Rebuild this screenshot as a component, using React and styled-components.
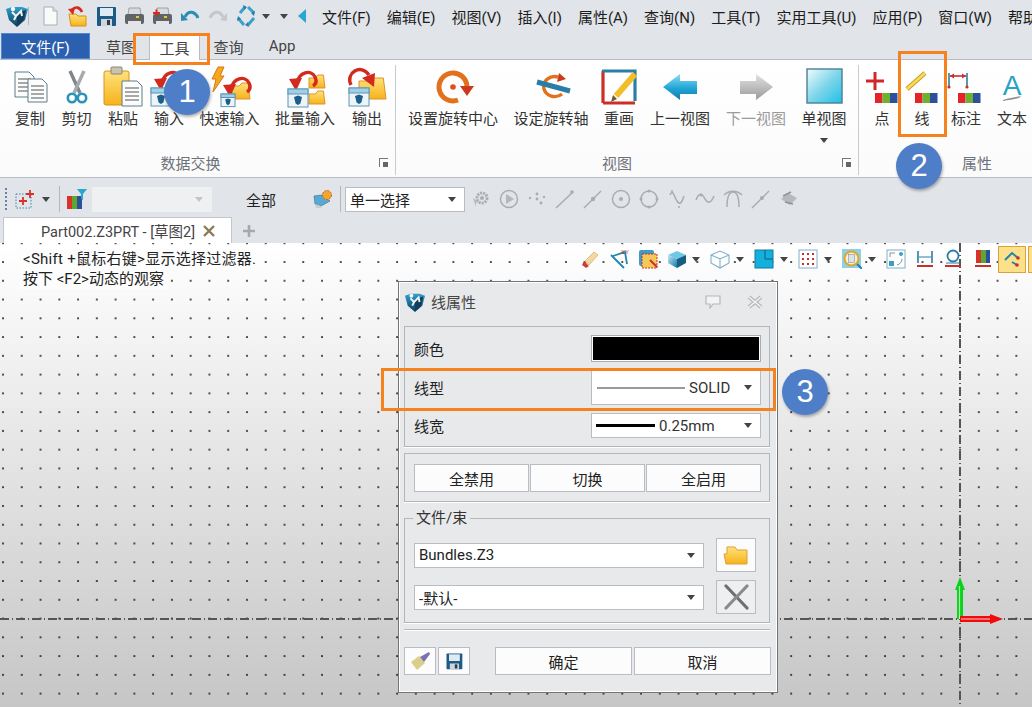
import React from "react";
import styled, { createGlobalStyle } from "styled-components";

const GlobalStyle = createGlobalStyle`
  html, body { margin: 0; padding: 0; }
  body {
    width: 1032px;
    height: 707px;
    overflow: hidden;
    font-family: Roboto, "Noto Sans CJK SC", sans-serif;
    font-size: 15px;
    color: #222;
  }
  * { box-sizing: border-box; }
`;

const ORANGE = "#f5821f";

const Page = styled.div`
  position: relative;
  width: 1032px;
  height: 707px;
  display: flex;
  flex-direction: column;
  overflow: hidden;
  background: #e1e4e8;
`;

const QuickBar = styled.div`
  height: 32px;
  flex: none;
  display: flex;
  align-items: center;
  padding-left: 6px;
  white-space: nowrap;
  overflow: hidden;
  svg { flex: none; }
`;

const QuickTools = styled.div`
  display: flex;
  flex: none;
  align-items: center;
  gap: 4px;
  margin-left: 9px;
`;

const Separator = styled.span`
  width: 1px;
  height: ${(p) => p.$h || 22}px;
  background: #b4b8bd;
  flex: none;
  margin-left: ${(p) => p.$m || 0}px;
`;

const MenuBar = styled.nav`
  display: flex;
  flex: none;
  gap: 16px;
  margin-left: 15px;
  color: #1c1c1c;
  span { flex: none; }
`;

const Caret = styled.i`
  display: block;
  flex: none;
  width: 0;
  height: 0;
  border-left: 4px solid transparent;
  border-right: 4px solid transparent;
  border-top: 5px solid ${(p) => p.$c || "#444"};
  margin-left: ${(p) => p.$m || 0}px;
  margin-top: ${(p) => p.$mt || 0}px;
`;

const TabRow = styled.div`
  height: 27px;
  flex: none;
  display: flex;
  align-items: flex-end;
  padding-left: 1px;
`;

const FileTab = styled.div`
  width: 89px;
  height: 26px;
  background: #2b5fb0;
  border: 1px solid #4d87d8;
  color: #fff;
  display: flex;
  align-items: center;
  justify-content: center;
`;

const RibbonTab = styled.div`
  height: 27px;
  width: ${(p) => p.$w}px;
  padding-left: ${(p) => p.$pl || 0}px;
  display: flex;
  align-items: center;
  justify-content: center;
  color: #444;
  background: ${(p) => (p.$active ? "#fff" : "transparent")};
  border: 1px solid ${(p) => (p.$active ? "#b9bdc3" : "transparent")};
  border-bottom: none;
  margin-bottom: ${(p) => (p.$active ? "-1px" : "0")};
  position: relative;
`;

const Ribbon = styled.section`
  height: 119px;
  flex: none;
  display: flex;
  overflow: hidden;
  background: linear-gradient(#fff, #fbfbfb);
  border-top: 1px solid #b9bdc3;
  border-bottom: 1px solid #b9bdc3;
`;

const Group = styled.div`
  width: ${(p) => p.$w}px;
  flex: none;
  display: flex;
  flex-direction: column;
  position: relative;
  margin: 5px 0 2px;
  border-right: ${(p) => (p.$last ? "none" : "1px solid #c8ccd1")};
`;

const GroupItems = styled.div`
  flex: 1;
  display: flex;
  padding-left: ${(p) => p.$pad}px;
`;

const GroupLabel = styled.div`
  height: 30px;
  padding-top: 6px;
  line-height: 26px;
  text-align: center;
  color: #6d737b;
  padding-right: ${(p) => p.$pr || 0}px;
`;

const Launcher = styled.span`
  position: absolute;
  right: 7px;
  bottom: 8px;
  width: 9px;
  height: 9px;
  border-left: 1px solid #777;
  border-top: 1px solid #777;
  &::after {
    content: "";
    position: absolute;
    right: 0;
    bottom: 0;
    width: 5px;
    height: 5px;
    background: #666;
  }
`;

const RibbonItem = styled.div`
  width: ${(p) => p.$w}px;
  flex: none;
  display: flex;
  flex-direction: column;
  align-items: center;
  white-space: nowrap;
  color: ${(p) => (p.$disabled ? "#9b9b9b" : "#333")};
  line-height: 20px;
  svg { display: block; flex: none; }
`;

const Toolbar = styled.div`
  height: 39px;
  flex: none;
  display: flex;
  align-items: center;
  padding: 3px 0 0 5px;
`;

const Grip = styled.span`
  width: 2px;
  height: 22px;
  flex: none;
  background: repeating-linear-gradient(#6a7fa8 0 2px, transparent 2px 4px);
`;

const FakeSelect = styled.div`
  width: ${(p) => p.$w}px;
  height: ${(p) => p.$h || 25}px;
  flex: none;
  display: flex;
  align-items: center;
  justify-content: space-between;
  padding: 0 8px 0 ${(p) => p.$pl ?? 4}px;
  background: ${(p) => (p.$disabled ? "#eff0f1" : "#fff")};
  border: 1px solid ${(p) => (p.$disabled ? "#eff0f1" : "#b9bdc3")};
  margin-left: ${(p) => p.$m || 0}px;
  color: #222;
`;

const ToolbarText = styled.span`
  width: 30px;
  margin-left: 34px;
  flex: none;
  white-space: nowrap;
`;

const GrayTools = styled.div`
  display: flex;
  gap: 8px;
  margin-left: 6px;
`;

const DocTabs = styled.div`
  height: 26px;
  flex: none;
  display: flex;
  align-items: flex-end;
  padding-left: 3px;
`;

const DocTab = styled.div`
  width: 229px;
  height: 26px;
  background: #fff;
  border: 1px solid #c4c8cd;
  border-bottom: none;
  display: flex;
  align-items: center;
  padding-left: 37px;
  color: #444;
  font-size: 14.5px;
  white-space: nowrap;
  gap: 7px;
`;

const AddTab = styled.span`
  margin: 0 0 4px 10px;
  display: block;
  height: 16px;
`;

const Canvas = styled.main`
  flex: 1;
  position: relative;
  overflow: hidden;
  padding: 6px 0 0 20px;
  background-color: #fff;
  background-image:
    radial-gradient(circle at 1px 1px, #000 0.6px, transparent 0.9px),
    linear-gradient(#fff 0%, #c6c6c6 100%);
  background-size: 18.78px 18.78px, 100% 100%;
  background-position: 2px 18px, 0 0;
`;

const NoteLine = styled.div`
  width: fit-content;
  height: 20px;
  line-height: 20px;
  padding: 0 3px;
  background: #fdfdfd;
  color: #222;
  letter-spacing: ${(p) => p.$ls || 0}px;
`;

const AxisH = styled.div`
  position: absolute;
  left: 0;
  right: 0;
  top: 375px;
  height: 2px;
  background: repeating-linear-gradient(90deg, #555 0 9px, transparent 9px 12px, #555 12px 13px, transparent 13px 16px);
`;

const AxisV = styled.div`
  position: absolute;
  left: 959px;
  top: 0;
  bottom: 0;
  width: 2px;
  background: repeating-linear-gradient(#555 0 9px, transparent 9px 12px, #555 12px 13px, transparent 13px 16px);
`;

const AxisArrows = styled.svg`
  position: absolute;
  left: 945px;
  top: 333px;
`;

const CanvasTools = styled.div`
  position: absolute;
  left: 579px;
  top: 3px;
  display: flex;
  align-items: center;
  height: 26px;
`;

const Tool = styled.span`
  width: 22px;
  height: 24px;
  flex: none;
  display: flex;
  align-items: center;
  justify-content: center;
  margin-left: ${(p) => p.$m || 0}px;
  ${(p) => p.$on && `
    background: #fde08a;
    border: 1px solid #d8a23c;
    width: 28px;
    height: 27px;
  `}
`;

const Dialog = styled.section`
  position: absolute;
  left: 398px;
  top: 38px;
  width: 380px;
  height: 412px;
  padding: 0 7px 0 5px;
  background: #e8e9eb;
  border: 1px solid #6f7579;
  box-shadow: inset 0 0 0 1px #fff;
`;

const TitleBar = styled.header`
  height: 44px;
  display: flex;
  align-items: center;
  padding: 0 7px 5px 1px;
  color: #444;
  gap: 6px;
  span { flex: 1; }
`;

const CloseSlot = styled.span`
  && { flex: none; }
  width: 16px;
  margin-left: 20px;
  display: flex;
`;

const Section = styled.div`
  position: relative;
  border: 1px solid #b3b7bb;
  box-shadow: 0 1px 0 #fff;
  margin-top: ${(p) => p.$mt || 0}px;
  padding: ${(p) => p.$p};
`;

const PropRow = styled.div`
  display: flex;
  align-items: center;
  justify-content: space-between;
  height: ${(p) => p.$h}px;
  margin-top: ${(p) => p.$mt || 0}px;
`;

const Swatch = styled.div`
  width: 170px;
  height: 27px;
  background: #000;
  border: 1px solid #a9adb1;
  box-shadow: inset 0 0 0 1px #fff;
`;

const LinePreview = styled.span`
  flex: none;
  width: ${(p) => p.$w}px;
  height: ${(p) => p.$t}px;
  background: ${(p) => p.$c};
`;

const SelectValue = styled.span`
  display: flex;
  align-items: center;
  gap: 4px;
  color: #333;
`;

const ButtonGrid = styled.div`
  display: grid;
  grid-template-columns: 115px 115px 115px;
  gap: 1px;
`;

const Btn = styled.button`
  height: ${(p) => p.$h || 28}px;
  width: ${(p) => (p.$w ? `${p.$w}px` : "auto")};
  flex: none;
  padding: 0;
  margin-left: ${(p) => p.$m || 0}px;
  display: flex;
  align-items: center;
  justify-content: center;
  background: ${(p) => (p.$muted ? "#eeeff0" : "#fcfcfc")};
  border: 1px solid #b9bdc3;
  font: inherit;
  color: #222;
`;

const Legend = styled.div`
  position: absolute;
  left: 8px;
  top: -11px;
  padding: 0 3px;
  line-height: 20px;
  background: #e8e9eb;
  color: #333;
`;

const BundleGrid = styled.div`
  display: grid;
  grid-template-columns: 290px 40px;
  grid-auto-rows: 34px;
  column-gap: 12px;
  row-gap: 8px;
  align-items: center;
`;

const Divider = styled.hr`
  margin: 6px 0 0;
  height: 2px;
  border: none;
  border-top: 1px solid #b3b7bb;
  border-bottom: 1px solid #fff;
`;

const DialogFooter = styled.footer`
  display: flex;
  margin-top: 16px;
  align-items: flex-end;
  gap: 2px;
`;

const InlineIcon = styled.span`
  display: flex;
  flex: none;
  margin-left: ${(p) => p.$m || 0}px;
`;

const Highlight = styled.div`
  position: absolute;
  left: ${(p) => p.$x}px;
  top: ${(p) => p.$y}px;
  width: ${(p) => p.$w}px;
  height: ${(p) => p.$h}px;
  border: 3px solid ${ORANGE};
  pointer-events: none;
`;

const Badge = styled.div`
  position: absolute;
  left: ${(p) => p.$x - 23}px;
  top: ${(p) => p.$y - 23}px;
  width: 46px;
  height: 46px;
  border-radius: 50%;
  background: #4f7ec9;
  box-shadow: 1px 2px 3px rgba(0, 0, 0, 0.3);
  color: #fff;
  font-family: "Liberation Sans", sans-serif;
  font-size: 31px;
  display: flex;
  align-items: center;
  justify-content: center;
`;

const GradientDefs = styled.svg`
  position: absolute;
  width: 0;
  height: 0;
`;

/* ---------- icons ---------- */

const Defs = () => (
  <GradientDefs aria-hidden="true">
    <defs>
      <linearGradient id="gold" x1="0" y1="0" x2="0" y2="1">
        <stop offset="0" stopColor="#ffe27a" />
        <stop offset="1" stopColor="#f6b21c" />
      </linearGradient>
      <linearGradient id="blueArrow" x1="0" y1="0" x2="0" y2="1">
        <stop offset="0" stopColor="#8fdcf2" />
        <stop offset="0.55" stopColor="#1fa6d6" />
        <stop offset="1" stopColor="#1479a8" />
      </linearGradient>
      <linearGradient id="grayArrow" x1="0" y1="0" x2="0" y2="1">
        <stop offset="0" stopColor="#e2e2e2" />
        <stop offset="1" stopColor="#9a9a9a" />
      </linearGradient>
      <linearGradient id="sky" x1="0" y1="0" x2="1" y2="1">
        <stop offset="0" stopColor="#f2fbfe" />
        <stop offset="0.5" stopColor="#7fd6ea" />
        <stop offset="1" stopColor="#1fc0e8" />
      </linearGradient>
      <linearGradient id="cube" x1="0" y1="0" x2="1" y2="1">
        <stop offset="0" stopColor="#bfe9f6" />
        <stop offset="1" stopColor="#1478a8" />
      </linearGradient>
      <linearGradient id="shield" x1="0" y1="0" x2="0" y2="1">
        <stop offset="0" stopColor="#2fa0cc" />
        <stop offset="1" stopColor="#0e3c5c" />
      </linearGradient>
    </defs>
  </GradientDefs>
);

const Logo = ({ s = 22 }) => (
  <svg width={s} height={s} viewBox="0 0 22 22">
    <path d="M0 4 L6 2 L16 2 L22 4 L19 15 L11 22 L3 15 Z" fill="url(#shield)" />
    <path d="M11 8 L20 5 L18 15 L11 21 Z" fill="#123e5c" />
    <path d="M6 7 L10 11 L8 15 M10 11 L15 6 L16 11" fill="none" stroke="#f4f7f9" strokeWidth="2" />
    <circle cx="7" cy="4" r="2.2" fill="#f4f7f9" />
  </svg>
);

const NewDoc = () => (
  <svg width="24" height="24" viewBox="0 0 24 24">
    <path d="M6 3 H15 L19 7 V21 H6 Z" fill="#fafafa" stroke="#a8adb2" />
    <path d="M15 3 V7 H19" fill="#dfe3e6" stroke="#a8adb2" />
  </svg>
);

const OpenDoc = () => (
  <svg width="24" height="24" viewBox="0 0 24 24">
    <path d="M3 10 H10 L12 12 H20 V22 H5 Z" fill="url(#gold)" stroke="#d98f17" />
    <path d="M16 8 C14 3 9 2 6 6" fill="none" stroke="#d52b1e" strokeWidth="2.6" />
    <path d="M2 5 L9 4 L7 11 Z" fill="#d52b1e" />
  </svg>
);

const Floppy = ({ s = 24 }) => (
  <svg width={s} height={s} viewBox="0 0 24 24">
    <rect x="3" y="3" width="19" height="19" rx="1" fill="#1c5a88" />
    <rect x="6" y="4" width="13" height="8" fill="#dfeaf2" />
    <rect x="7" y="15" width="11" height="7" fill="#cfd5da" />
    <rect x="13" y="16" width="3" height="5" fill="#2d3b46" />
  </svg>
);

const Printer = ({ plus }) => (
  <svg width="24" height="24" viewBox="0 0 24 24">
    <path d="M7 4 H18 L19 11 H6 Z" fill="#d9dcdf" stroke="#777" strokeWidth="0.6" />
    <rect x="3" y="10" width="19" height="10" rx="2" fill="#5f6468" />
    <rect x="6" y="17" width="13" height="4" fill="#e4e4e4" />
    <rect x="14" y="12" width="3" height="2" fill="#f5c531" />
    {plus && <path d="M3 9 H10 M6.5 5.5 V12.5" stroke="#d52b1e" strokeWidth="2" />}
  </svg>
);

const UndoArrow = ({ flip, c = "#2b8cb4" }) => (
  <svg width="24" height="24" viewBox="0 0 24 24" style={flip ? { transform: "scaleX(-1)" } : undefined}>
    <path d="M7 13 C10 6 17 7 20 14" fill="none" stroke={c} strokeWidth="3" />
    <path d="M3 9 L10 16 L3 17 Z" fill={c} />
  </svg>
);

const SpinTarget = () => (
  <svg width="24" height="24" viewBox="0 0 24 24">
    <g fill="none" stroke="#3aa0cc" strokeWidth="3">
      <path d="M6 9 L11 3" />
      <path d="M14 3 L20 9" />
      <path d="M20 14 L14 21" />
      <path d="M10 21 L4 14" />
    </g>
    <path d="M9 1 L13 3 L10 6 Z M21 7 L20 12 L17 9 Z M15 23 L11 21 L14 18 Z M3 17 L4 12 L7 15 Z" fill="#2b7ea8" />
  </svg>
);

const ColorBar = ({ x, y }) => (
  <g transform={`translate(${x} ${y})`}>
    <rect width="7.5" height="10" fill="#e4232b" />
    <rect x="7.5" width="7.5" height="10" fill="#6eb030" />
    <rect x="15" width="7.5" height="10" fill="#2c4f9e" />
  </g>
);

const Icon48 = ({ children }) => (
  <svg width="48" height="44" viewBox="0 0 48 44">
    {children}
  </svg>
);

const Sheet = ({ x, y, w, h }) => (
  <g>
    <path d={`M${x} ${y} H${x + w - 5} L${x + w} ${y + 5} V${y + h} H${x} Z`} fill="#fbfcfc" stroke="#5f7a88" />
    {[7, 11, 15, 19].map((d) =>
      y + d < y + h - 2 ? (
        <path key={d} d={`M${x + 3} ${y + d} H${x + w - 3}`} stroke="#555" strokeWidth="1" />
      ) : null
    )}
  </g>
);

const CopyIcon = () => (
  <Icon48>
    <Sheet x={9} y={7} w={19} h={25} />
    <Sheet x={22} y={14} w={19} h={23} />
  </Icon48>
);

const ScissorsIcon = () => (
  <Icon48>
    <path d="M17 6 L27 28" stroke="#7f858a" strokeWidth="3.4" />
    <path d="M31 6 L21 28" stroke="#a5aaae" strokeWidth="3.4" />
    <circle cx="19" cy="33" r="4.2" fill="none" stroke="#2a93b8" strokeWidth="2.6" />
    <circle cx="29" cy="33" r="4.2" fill="none" stroke="#2a93b8" strokeWidth="2.6" />
  </Icon48>
);

const PasteIcon = () => (
  <Icon48>
    <rect x="5" y="6" width="25" height="34" rx="2" fill="url(#gold)" stroke="#d4951e" />
    <rect x="12" y="2" width="11" height="7" rx="1" fill="#c9c3b4" stroke="#8b8577" />
    <Sheet x={23} y={16} w={20} h={25} />
  </Icon48>
);

const CurlArrow = ({ x, y }) => (
  <g transform={`translate(${x} ${y})`}>
    <path d="M8 14 C10 3 22 0 26 8 C28 12 27 15 24 17" fill="none" stroke="#d42a1e" strokeWidth="3.4" />
    <path d="M0 10 L13 9 L7 22 Z" fill="#d42a1e" />
  </g>
);

const Folder = ({ x, y, w = 18, h = 16 }) => (
  <path
    d={`M${x} ${y + 3} H${x + w * 0.4} L${x + w * 0.55} ${y} H${x + w * 0.9} L${x + w} ${y + h} H${x} Z`}
    fill="url(#gold)"
    stroke="#e0922a"
  />
);

const MiniWindow = ({ x, y, s = 20 }) => (
  <g transform={`translate(${x} ${y})`}>
    <rect width={s} height={s * 0.9} fill="#eef5f9" stroke="#5c95b6" />
    <rect width={s} height={s * 0.25} fill="#9fd0e8" stroke="#5c95b6" />
    <path d={`M${s * 0.3} ${s * 0.4} L${s * 0.5} ${s * 0.33} L${s * 0.7} ${s * 0.4} L${s * 0.62} ${s * 0.72} L${s * 0.5} ${s * 0.8} L${s * 0.38} ${s * 0.72} Z`} fill="#1c5f8a" />
  </g>
);

const InputIcon = () => (
  <Icon48>
    <Folder x={26} y={18} />
    <CurlArrow x={9} y={4} />
    <MiniWindow x={6} y={23} />
  </Icon48>
);

const QuickInputIcon = () => (
  <Icon48>
    <path d="M12 2 H18 L14 11 H18 L7 27 L10 14 H6 Z" fill="#f6a81c" stroke="#d9771a" />
    <Folder x={26} y={18} />
    <CurlArrow x={17} y={10} />
    <MiniWindow x={15} y={29} s={14} />
  </Icon48>
);

const BatchIcon = () => (
  <Icon48>
    <Folder x={28} y={10} w={16} h={13} />
    <Folder x={28} y={26} w={16} h={13} />
    <CurlArrow x={8} y={4} />
    <MiniWindow x={7} y={24} />
  </Icon48>
);

const OutputIcon = () => (
  <Icon48>
    <Folder x={16} y={13} w={27} h={21} />
    <path d="M8 20 C2 8 18 -2 26 10" fill="none" stroke="#d42a1e" strokeWidth="3.4" />
    <path d="M19 13 L32 8 L31 22 Z" fill="#d42a1e" />
    <MiniWindow x={6} y={23} />
  </Icon48>
);

const RotateCenterIcon = () => (
  <Icon48>
    <path d="M29 35 A14 14 0 1 1 38 21" fill="none" stroke="#e2701c" strokeWidth="5" />
    <path d="M31 21 H45 L38 31 Z" fill="#cb3a1c" />
    <circle cx="24" cy="22" r="2.8" fill="#d9521c" />
  </Icon48>
);

const RotateAxisIcon = () => (
  <Icon48>
    <path d="M31 12 A11 10 0 1 0 35 29" fill="none" stroke="#e2701c" strokeWidth="3.4" />
    <path d="M10 17 L43 26" stroke="#2a7ea6" strokeWidth="5" />
    <path d="M32 8 L39 14 L30 17 Z" fill="#cb3a1c" />
  </Icon48>
);

const RedrawIcon = () => (
  <Icon48>
    <rect x="8" y="6" width="32" height="32" fill="#fff" />
    <path d="M8 38 V6 M8 38 H40" stroke="#cf2d27" strokeWidth="3.2" />
    <path d="M7 6 H40 V36" fill="none" stroke="#2b7ea6" strokeWidth="3.2" />
    <path d="M40 9 L21 31" stroke="#f3bd2a" strokeWidth="6" />
    <path d="M18 30 L22 34 L16 37 Z" fill="#6e5a3a" />
  </Icon48>
);

const PrevViewIcon = () => (
  <Icon48>
    <path d="M7 22 L24 9 V16 H41 V29 H24 V35 Z" fill="url(#blueArrow)" />
  </Icon48>
);

const NextViewIcon = () => (
  <Icon48>
    <path d="M41 22 L24 9 V16 H8 V29 H24 V35 Z" fill="url(#grayArrow)" />
  </Icon48>
);

const SingleViewIcon = () => (
  <Icon48>
    <rect x="7" y="4" width="35" height="34" fill="url(#sky)" stroke="#4a7f92" strokeWidth="1.4" />
  </Icon48>
);

const PointIcon = () => (
  <Icon48>
    <path d="M8 16 H26 M17 7 V25" stroke="#d0262c" strokeWidth="3" />
    <ColorBar x={17} y={28} />
  </Icon48>
);

const LineIcon = () => (
  <Icon48>
    <path d="M9 24 L27 8" stroke="#c99a1f" strokeWidth="4.4" />
    <path d="M9 24 L27 8" stroke="#f7dc5a" strokeWidth="2.6" />
    <ColorBar x={17} y={28} />
  </Icon48>
);

const DimensionIcon = () => (
  <Icon48>
    <path d="M7 8 V21 M25 8 V21" stroke="#2a7ea6" strokeWidth="1.6" />
    <path d="M8 11 H24" stroke="#c9302c" strokeWidth="1.6" />
    <path d="M8 11 L12 8.5 V13.5 Z M24 11 L20 8.5 V13.5 Z" fill="#c9302c" />
    <circle cx="7" cy="22" r="1.6" fill="#c9302c" />
    <circle cx="25" cy="22" r="1.6" fill="#c9302c" />
    <ColorBar x={16} y={28} />
  </Icon48>
);

const TextIcon = () => (
  <Icon48>
    <text x="24" y="30" textAnchor="middle" fontFamily="Liberation Sans, sans-serif" fontSize="28" fill="#27a3c4">A</text>
    <path d="M15 35 C22 33 28 32 33 31 L31 33 C26 34 21 35 15 36 Z" fill="#8b8f93" />
  </Icon48>
);

const Ico20 = ({ children }) => (
  <svg width="20" height="20" viewBox="0 0 20 20">
    {children}
  </svg>
);

const GRAY = { fill: "none", stroke: "#a9adb1", strokeWidth: 1.5 };

const grayIcons = [
  <g key="a"><circle cx="11" cy="9" r="5" {...GRAY} strokeDasharray="2 1" strokeWidth="3" /><circle cx="11" cy="9" r="2" fill="#a9adb1" /><path d="M2 9 L8 13 L5 14 L5 18 Z" fill="#b8bcc0" /></g>,
  <g key="b"><circle cx="10" cy="10" r="8.5" {...GRAY} /><path d="M7 5 L15 10 L7 15 Z" fill="#b4b8bc" /></g>,
  <g key="c" fill="#a9adb1"><circle cx="10" cy="5" r="1.4" /><circle cx="3" cy="9" r="1.2" /><circle cx="10" cy="10" r="1.4" /><circle cx="17" cy="8" r="1.2" /><circle cx="14" cy="14" r="1.4" /></g>,
  <g key="d"><path d="M1 19 L18 3" {...GRAY} /><circle cx="17" cy="3" r="1.8" fill="#a9adb1" /></g>,
  <g key="e"><path d="M1 19 L18 2" {...GRAY} /><circle cx="10" cy="10" r="2.2" fill="#a9adb1" /></g>,
  <g key="f"><circle cx="10" cy="10" r="8.5" {...GRAY} /><circle cx="10" cy="10" r="2" fill="#a9adb1" /></g>,
  <g key="g"><circle cx="10" cy="10" r="8" {...GRAY} /><g fill="#a9adb1"><circle cx="10" cy="2" r="1.5" /><circle cx="2" cy="10" r="1.5" /><circle cx="18" cy="10" r="1.5" /><circle cx="10" cy="18" r="1.5" /></g></g>,
  <g key="h"><path d="M3 6 C6 -1 7 8 10 12 C13 17 15 13 17 7" {...GRAY} /><g fill="#a9adb1"><circle cx="5" cy="2" r="1" /><circle cx="12" cy="18" r="1" /></g></g>,
  <g key="i"><path d="M1 11 C4 3 7 4 10 10 C13 15 16 14 19 7" {...GRAY} /><circle cx="6" cy="6" r="1.5" fill="#a9adb1" /></g>,
  <g key="j"><path d="M4 18 C4 6 7 3 10 3 C13 3 16 6 16 18" {...GRAY} /><path d="M1 6 C6 1 14 1 19 6" {...GRAY} /></g>,
  <g key="k"><path d="M1 19 L18 2" {...GRAY} /><circle cx="11" cy="9" r="2" fill="#a9adb1" /></g>,
  <g key="l"><path d="M2 10 L9 4 L18 9 L11 16 Z" fill="#b6babe" /><path d="M4 7 L12 3 M6 13 L14 15" stroke="#8f9397" strokeWidth="1.5" /></g>,
];

const PickerIcon = () => (
  <Ico20>
    <rect x="1" y="5" width="15" height="14" fill="none" stroke="#3d88ad" strokeDasharray="1.5 1.5" />
    <path d="M4 12 H12 M8 8 V16 M11 5 H19 M15 1 V9" stroke="#d8322a" strokeWidth="1.8" />
  </Ico20>
);

const FilterIcon = () => (
  <Ico20>
    <rect x="0" y="7" width="5" height="13" fill="#d9322a" />
    <rect x="5" y="7" width="5" height="13" fill="#5fa830" />
    <rect x="10" y="7" width="5" height="13" fill="#2c4f9e" />
    <path d="M10 0 H20 L16 5 V11 L14 10 V5 Z" fill="#2aa7d0" />
  </Ico20>
);

const GearCube = () => (
  <Ico20>
    <path d="M1 7 L9 6 L17 12 L8 17 L2 15 Z" fill="#5aa9d0" stroke="#2c6f96" strokeWidth="0.6" />
    <path d="M2 15 L3 19 L8 19 L8 17 Z" fill="#c7cdd2" />
    <circle cx="14" cy="6" r="4.5" fill="#f0a82c" stroke="#cf5a20" strokeDasharray="2 1" />
  </Ico20>
);

const EraserIcon = () => (
  <Ico20>
    <path d="M5 12 L14 3 L18 6 L9 16 Z" fill="#f3d9a0" stroke="#c9a05a" strokeWidth="0.6" />
    <path d="M4 12 L9 17 L6 19 L2 16 Z" fill="#cf3b35" />
  </Ico20>
);

const AxisPlaneIcon = () => (
  <Ico20>
    <path d="M1 6 L14 19 M3 7 L15 3 L17 15" fill="none" stroke="#1f86ad" strokeWidth="1.8" />
    <text x="11" y="5" fontFamily="Liberation Sans, sans-serif" fontSize="6" fill="#c9302c">XY</text>
  </Ico20>
);

const LayersIcon = () => (
  <Ico20>
    <rect x="1" y="1" width="15" height="16" rx="2" fill="#3e9dc4" />
    <rect x="4" y="5" width="15" height="14" fill="#f4c95a" stroke="#c9302c" strokeDasharray="2 1" />
    <path d="M12 11 L19 18" stroke="#c9302c" strokeWidth="2" />
  </Ico20>
);

const ShadedCube = () => (
  <Ico20>
    <path d="M1 6 L10 2 L19 6 L10 10 Z" fill="#6fc9e6" />
    <path d="M1 6 L10 10 V19 L1 14 Z" fill="url(#cube)" />
    <path d="M19 6 L10 10 V19 L19 14 Z" fill="#135f86" />
  </Ico20>
);

const WireCube = () => (
  <Ico20>
    <path d="M1 6 L10 2 L19 6 V14 L10 19 L1 14 Z M1 6 L10 10 L19 6 M10 10 V19" fill="#fff" stroke="#7cb2ca" strokeWidth="1.1" />
  </Ico20>
);

const QuadIcon = () => (
  <Ico20>
    <rect x="1" y="1" width="18" height="18" fill="#12b0da" stroke="#10799f" />
    <path d="M11 1 V10 H19" fill="none" stroke="#0d5f80" />
  </Ico20>
);

const GridDots = () => (
  <Ico20>
    <rect x="1" y="1" width="18" height="18" fill="#fff" stroke="#7cb2ca" />
    {[5, 10, 15].map((y) =>
      [5, 10, 15].map((x) => <rect key={`${x}-${y}`} x={x - 1} y={y - 1} width="2" height="2" fill="#c9302c" />)
    )}
  </Ico20>
);

const LensIcon = () => (
  <Ico20>
    <rect x="0" y="0" width="19" height="19" fill="#8fcfe8" />
    <circle cx="9.5" cy="9.5" r="7" fill="#f4f0dc" stroke="#d9a82c" strokeWidth="2" />
    <rect x="6.5" y="5.5" width="6" height="8" fill="#dfe3e6" stroke="#8a8f93" strokeWidth="0.6" />
    <path d="M15 15 L20 20" stroke="#2a7ea6" strokeWidth="2" />
  </Ico20>
);

const SnapIcon = () => (
  <Ico20>
    <rect x="1" y="1" width="18" height="18" fill="#fff" stroke="#7cb2ca" />
    <rect x="3" y="12" width="5" height="5" fill="#3e9dc4" />
    <circle cx="15" cy="5" r="2" fill="#3e9dc4" />
    <path d="M4 8 V4 H9 M16 10 C16 13 14 15 11 16" fill="none" stroke="#8a8f93" />
  </Ico20>
);

const SpanIcon = () => (
  <Ico20>
    <path d="M3 2 V14 M17 2 V14" stroke="#2a7ea6" strokeWidth="1.6" />
    <path d="M4 8 H16" stroke="#2a7ea6" />
    <path d="M2 17 H18" stroke="#c9302c" strokeWidth="2" />
  </Ico20>
);

const RadiusIcon = () => (
  <Ico20>
    <circle cx="10" cy="7" r="5.5" fill="none" stroke="#2a7ea6" strokeWidth="1.8" />
    <path d="M3 14 H17" stroke="#2a7ea6" />
    <path d="M2 17 H18" stroke="#c9302c" strokeWidth="2" />
  </Ico20>
);

const ColorSpan = () => (
  <Ico20>
    <rect x="3" y="1" width="5" height="13" fill="#d9322a" />
    <rect x="8" y="1" width="5" height="13" fill="#5fa830" />
    <rect x="13" y="1" width="4" height="13" fill="#2c4f9e" />
    <path d="M2 17 H18" stroke="#c9302c" strokeWidth="2" />
  </Ico20>
);

const PathIcon = () => (
  <Ico20>
    <path d="M3 11 L10 4 L16 9" fill="none" stroke="#1f86ad" strokeWidth="2" />
    <path d="M10 13 L15 16" stroke="#1f86ad" strokeWidth="2" />
    <circle cx="16" cy="9" r="1.8" fill="#c9302c" />
    <circle cx="15" cy="16" r="1.8" fill="#c9302c" />
  </Ico20>
);

const BubbleIcon = () => (
  <svg width="16" height="14" viewBox="0 0 16 14">
    <path d="M1 1 H15 V9 H8 L5 13 V9 H1 Z" fill="#f2f3f4" stroke="#b4b8bc" strokeWidth="1.2" />
  </svg>
);

const CloseGray = () => (
  <svg width="16" height="14" viewBox="0 0 16 14">
    <path d="M2 2 L14 12 M14 2 L2 12" stroke="#b4b8bc" strokeWidth="4" />
    <path d="M2 2 L14 12 M14 2 L2 12" stroke="#f2f3f4" strokeWidth="1.6" />
  </svg>
);

const TabClose = () => (
  <svg width="14" height="14" viewBox="0 0 14 14">
    <path d="M2 2 L12 12 M12 2 L2 12" stroke="#8a7a55" strokeWidth="2.4" />
  </svg>
);

const TabPlus = () => (
  <svg width="14" height="16" viewBox="0 0 14 16">
    <path d="M1 8 H13 M7 2 V14" stroke="#a8a8a8" strokeWidth="2.6" />
  </svg>
);

const CollapseMark = () => (
  <svg width="10" height="16" viewBox="0 0 10 16">
    <path d="M9 1 V15 L1 8 Z" fill="#2aa7d0" />
  </svg>
);

const FolderOpenBtn = () => (
  <svg width="26" height="20" viewBox="0 0 26 20">
    <path d="M4 2 H12 L14 5 H24 V19 H3 L1 9 H4 Z" fill="url(#gold)" stroke="#e0a030" />
  </svg>
);

const BigCross = () => (
  <svg width="26" height="26" viewBox="0 0 26 26">
    <path d="M3 2 L24 24" stroke="#6f6f6f" strokeWidth="3.2" strokeLinecap="round" />
    <path d="M24 2 L3 24" stroke="#8a8a8a" strokeWidth="3.2" strokeLinecap="round" />
  </svg>
);

const Brush = () => (
  <svg width="22" height="20" viewBox="0 0 22 20">
    <path d="M2 11 L10 5 L16 12 L8 19 Z" fill="#d9cf8a" />
    <path d="M11 6 L20 1 L21 3 L15 11 Z" fill="#7d6fb0" />
  </svg>
);

const AxisGlyph = () => (
  <AxisArrows width="62" height="50" viewBox="0 0 62 50">
    <path d="M15 1 L20 14 H18 V43 H12 V14 H10 Z" fill="#0ad21c" />
    <path d="M14.5 10 V43" stroke="#a8ffa8" strokeWidth="1.2" />
    <path d="M15 40 H45 V38 L58 43 L45 48 V46 H15 Z" fill="#f00a0a" />
    <path d="M16 43 H45" stroke="#ffb0b0" strokeWidth="1.2" />
  </AxisArrows>
);

const ribbonGroups = {
  exchange: [
    ["复制", 46, CopyIcon],
    ["剪切", 47, ScissorsIcon],
    ["粘贴", 46, PasteIcon],
    ["输入", 46, InputIcon],
    ["快速输入", 75, QuickInputIcon],
    ["批量输入", 76, BatchIcon],
    ["输出", 48, OutputIcon],
  ],
  view: [
    ["设置旋转中心", 102, RotateCenterIcon],
    ["设定旋转轴", 94, RotateAxisIcon],
    ["重画", 42, RedrawIcon],
    ["上一视图", 80, PrevViewIcon],
    ["下一视图", 72, NextViewIcon, true],
    ["单视图", 64, SingleViewIcon],
  ],
  props: [
    ["点", 40, PointIcon],
    ["线", 40, LineIcon],
    ["标注", 48, DimensionIcon],
    ["文本", 44, TextIcon],
  ],
};

function ItemList({ items }) {
  return items.map(([label, w, Glyph, disabled]) => (
    <RibbonItem key={label} $w={w} $disabled={disabled}>
      <Glyph />
      {label}
      {label === "单视图" && <Caret $mt={9} />}
    </RibbonItem>
  ));
}

export default function App() {
  return (
    <Page>
      <GlobalStyle />
      <Defs />

      <QuickBar>
        <Logo />
        <Separator $h={18} />
        <QuickTools>
          <NewDoc />
          <OpenDoc />
          <Floppy />
          <Printer />
          <Printer plus />
          <UndoArrow />
          <UndoArrow flip c="#c4c8cb" />
          <SpinTarget />
        </QuickTools>
        <Caret $m={4} />
        <Caret $m={10} />
        <InlineIcon $m={9}><CollapseMark /></InlineIcon>
        <MenuBar>
          <span>文件(F)</span>
          <span>编辑(E)</span>
          <span>视图(V)</span>
          <span>插入(I)</span>
          <span>属性(A)</span>
          <span>查询(N)</span>
          <span>工具(T)</span>
          <span>实用工具(U)</span>
          <span>应用(P)</span>
          <span>窗口(W)</span>
          <span>帮助</span>
        </MenuBar>
      </QuickBar>

      <TabRow>
        <FileTab>文件(F)</FileTab>
        <RibbonTab $w={59} $pl={3}>草图</RibbonTab>
        <RibbonTab $w={51} $active>工具</RibbonTab>
        <RibbonTab $w={57}>查询</RibbonTab>
        <RibbonTab $w={50}>App</RibbonTab>
      </TabRow>

      <Ribbon>
        <Group $w={396}>
          <GroupItems $pad={7}>
            <ItemList items={ribbonGroups.exchange} />
          </GroupItems>
          <GroupLabel $pr={14}>数据交换</GroupLabel>
          <Launcher />
        </Group>
        <Group $w={463}>
          <GroupItems $pad={6}>
            <ItemList items={ribbonGroups.view} />
          </GroupItems>
          <GroupLabel $pr={20}>视图</GroupLabel>
          <Launcher />
        </Group>
        <Group $w={236} $last>
          <GroupItems $pad={3}>
            <ItemList items={ribbonGroups.props} />
          </GroupItems>
          <GroupLabel>属性</GroupLabel>
        </Group>
      </Ribbon>

      <Toolbar>
        <Grip />
        <InlineIcon $m={8}><PickerIcon /></InlineIcon>
        <Caret $m={7} />
        <Separator $h={26} $m={9} />
        <InlineIcon $m={7}><FilterIcon /></InlineIcon>
        <FakeSelect $w={120} $m={5} $disabled><span /><Caret $c="#c4c4c4" /></FakeSelect>
        <ToolbarText>全部</ToolbarText>
        <InlineIcon $m={37}><GearCube /></InlineIcon>
        <Separator $h={26} $m={7} />
        <FakeSelect $w={120} $m={4}>单一选择<Caret /></FakeSelect>
        <GrayTools>
          {grayIcons.map((g) => (
            <Ico20 key={g.key}>{g}</Ico20>
          ))}
        </GrayTools>
      </Toolbar>

      <DocTabs>
        <DocTab>Part002.Z3PRT - [草图2]<TabClose /></DocTab>
        <AddTab><TabPlus /></AddTab>
      </DocTabs>

      <Canvas>
        <NoteLine $ls={0.27}>&lt;Shift +鼠标右键&gt;显示选择过滤器.</NoteLine>
        <NoteLine>按下 &lt;F2&gt;动态的观察</NoteLine>

        <AxisH />
        <AxisV />
        <AxisGlyph />

        <CanvasTools>
          <Tool><EraserIcon /></Tool>
          <Tool $m={8}><AxisPlaneIcon /></Tool>
          <Tool $m={6}><LayersIcon /></Tool>
          <Tool $m={7}><ShadedCube /></Tool>
          <Caret $m={4} />
          <Tool $m={9}><WireCube /></Tool>
          <Caret $m={5} />
          <Tool $m={9}><QuadIcon /></Tool>
          <Caret $m={5} />
          <Tool $m={9}><GridDots /></Tool>
          <Caret $m={5} />
          <Tool $m={9}><LensIcon /></Tool>
          <Caret $m={5} />
          <Tool $m={9}><SnapIcon /></Tool>
          <Tool $m={7}><SpanIcon /></Tool>
          <Tool $m={6}><RadiusIcon /></Tool>
          <Tool $m={8}><ColorSpan /></Tool>
          <Tool $m={4} $on><PathIcon /></Tool>
          <Tool $m={2} $on />
        </CanvasTools>

        <Dialog>
          <TitleBar>
            <Logo s={20} />
            <span>线属性</span>
            <BubbleIcon />
            <CloseSlot><CloseGray /></CloseSlot>
          </TitleBar>

          <Section $p="8px 8px 8px 9px">
            <PropRow $h={27}>颜色<Swatch /></PropRow>
            <PropRow $h={35} $mt={8}>
              线型
              <FakeSelect $w={170} $h={35} $pl={5}>
                <SelectValue><LinePreview $w={88} $t={2} $c="#9a9a9a" />SOLID</SelectValue>
                <Caret />
              </FakeSelect>
            </PropRow>
            <PropRow $h={25} $mt={8}>
              线宽
              <FakeSelect $w={170} $pl={4}>
                <SelectValue><LinePreview $w={59} $t={3} $c="#000" />0.25mm</SelectValue>
                <Caret />
              </FakeSelect>
            </PropRow>
          </Section>

          <Section $mt={6} $p="10px 8px 9px 9px">
            <ButtonGrid>
              <Btn>全禁用</Btn>
              <Btn>切换</Btn>
              <Btn>全启用</Btn>
            </ButtonGrid>
          </Section>

          <Section $mt={16} $p="19px 9px 8px 9px">
            <Legend>文件/束</Legend>
            <BundleGrid>
              <FakeSelect $w={290}>Bundles.Z3<Caret /></FakeSelect>
              <Btn $h={34} $w={40}><FolderOpenBtn /></Btn>
              <FakeSelect $w={290}>-默认-<Caret /></FakeSelect>
              <Btn $h={34} $w={40} $muted><BigCross /></Btn>
            </BundleGrid>
          </Section>

          <Divider />

          <DialogFooter>
            <Btn $w={32}><Brush /></Btn>
            <Btn $w={32}><Floppy s={20} /></Btn>
            <Btn $w={137} $m={23}>确定</Btn>
            <Btn $w={137}>取消</Btn>
          </DialogFooter>
        </Dialog>
      </Canvas>

      <Highlight $x={133} $y={33} $w={77} $h={32} />
      <Highlight $x={898} $y={51} $w={49} $h={86} />
      <Highlight $x={381} $y={368} $w={395} $h={43} />
      <Badge $x={187} $y={92}>1</Badge>
      <Badge $x={919} $y={166}>2</Badge>
      <Badge $x={805} $y={392}>3</Badge>
    </Page>
  );
}
